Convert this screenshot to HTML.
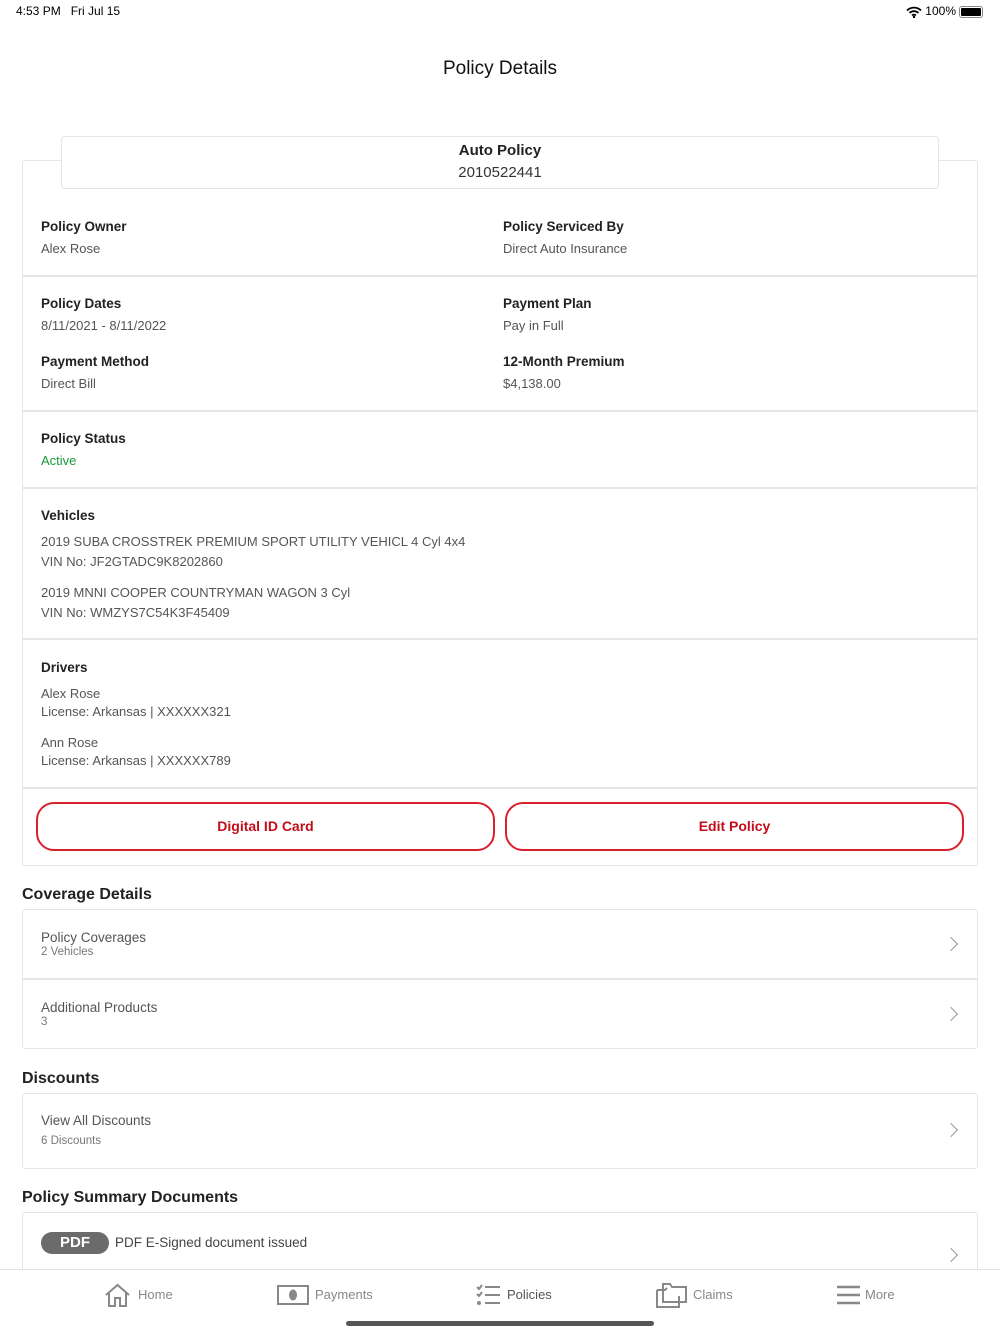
<!DOCTYPE html>
<html><head><meta charset="utf-8"><style>
*{margin:0;padding:0;box-sizing:border-box}
body{width:1000px;height:1334px;background:#fff;font-family:"Liberation Sans",sans-serif;position:relative;overflow:hidden;color:#222}
.a{position:absolute;white-space:nowrap}
.l{font-size:13.5px;font-weight:bold;color:#222}
.v{font-size:13px;color:#555}
.h{font-size:16px;font-weight:bold;color:#222}
.line{position:absolute;left:22px;width:956px;height:2px;background:#e6e6e6}
.box{position:absolute;left:22px;width:956px;border:1.5px solid #e6e6e6;border-radius:3px;background:#fff}
.btn{position:absolute;top:802px;height:49px;border:2px solid #d9202d;border-radius:18px;color:#c40d1a;font-weight:bold;font-size:14px;text-align:center;line-height:45px}
.chev{position:absolute;right:22px;width:10px;height:10px;border-right:1.5px solid #999;border-top:1.5px solid #999;transform:rotate(45deg)}
.tab{position:absolute;top:1287px;font-size:13px;color:#888}
</style></head><body>
<div class="a" style="left:16px;top:4px;font-size:12px;color:#000">4:53 PM&nbsp;&nbsp;&nbsp;Fri Jul 15</div>
<div class="a" style="right:44px;top:4px;font-size:12px;color:#000">100%</div>
<svg class="a" style="left:906px;top:6px" width="16" height="12" viewBox="0 0 16 12"><path d="M1 4.5a10 10 0 0 1 14 0M3.5 7a6.5 6.5 0 0 1 9 0M6 9.4a3 3 0 0 1 4 0" stroke="#000" stroke-width="1.8" fill="none"/><circle cx="8" cy="11" r="1.2"/></svg>
<div class="a" style="left:959px;top:6px;width:24px;height:12px;border:1px solid #888;border-radius:3px;padding:1px"><div style="width:100%;height:100%;background:#000;border-radius:1px"></div></div>
<div class="a" style="left:0;width:1000px;top:58px;text-align:center;font-size:19px;color:#111">Policy Details</div>

<div class="box" style="top:160px;height:706px"></div>
<div class="a" style="left:61px;top:136px;width:878px;height:53px;border:1.5px solid #e6e6e6;border-radius:4px;background:#fff;text-align:center">
<div style="font-size:15px;font-weight:bold;margin-top:5px">Auto Policy</div>
<div style="font-size:15px;color:#333;margin-top:5px">2010522441</div></div>

<div class="a l" style="left:41px;top:219px">Policy Owner</div>
<div class="a v" style="left:41px;top:241px">Alex Rose</div>
<div class="a l" style="left:503px;top:219px">Policy Serviced By</div>
<div class="a v" style="left:503px;top:241px">Direct Auto Insurance</div>
<div class="line" style="top:275px"></div>
<div class="a l" style="left:41px;top:296px">Policy Dates</div>
<div class="a v" style="left:41px;top:318px">8/11/2021 - 8/11/2022</div>
<div class="a l" style="left:503px;top:296px">Payment Plan</div>
<div class="a v" style="left:503px;top:318px">Pay in Full</div>
<div class="a l" style="left:41px;top:354px">Payment Method</div>
<div class="a v" style="left:41px;top:376px">Direct Bill</div>
<div class="a l" style="left:503px;top:354px">12-Month Premium</div>
<div class="a v" style="left:503px;top:376px">$4,138.00</div>
<div class="line" style="top:410px"></div>
<div class="a l" style="left:41px;top:431px">Policy Status</div>
<div class="a v" style="left:41px;top:453px;color:#1a9a3a">Active</div>
<div class="line" style="top:487px"></div>
<div class="a l" style="left:41px;top:508px">Vehicles</div>
<div class="a v" style="left:41px;top:534px">2019 SUBA CROSSTREK PREMIUM SPORT UTILITY VEHICL 4 Cyl 4x4</div>
<div class="a v" style="left:41px;top:554px">VIN No: JF2GTADC9K8202860</div>
<div class="a v" style="left:41px;top:585px">2019 MNNI COOPER COUNTRYMAN WAGON 3 Cyl</div>
<div class="a v" style="left:41px;top:605px">VIN No: WMZYS7C54K3F45409</div>
<div class="line" style="top:638px"></div>
<div class="a l" style="left:41px;top:660px">Drivers</div>
<div class="a v" style="left:41px;top:686px">Alex Rose</div>
<div class="a v" style="left:41px;top:704px">License: Arkansas | XXXXXX321</div>
<div class="a v" style="left:41px;top:735px">Ann Rose</div>
<div class="a v" style="left:41px;top:753px">License: Arkansas | XXXXXX789</div>
<div class="line" style="top:787px"></div>
<div class="btn" style="left:36px;width:459px">Digital ID Card</div>
<div class="btn" style="left:505px;width:459px">Edit Policy</div>

<div class="a h" style="left:22px;top:886px">Coverage Details</div>
<div class="box" style="top:909px;height:140px"></div>
<div class="line" style="top:978px"></div>
<div class="a" style="left:41px;top:930px;font-size:13.5px;color:#555">Policy Coverages</div>
<div class="a" style="left:41px;top:946px;font-size:11.5px;color:#777">2 Vehicles</div>
<div class="chev" style="top:939px;right:44px"></div>
<div class="a" style="left:41px;top:1000px;font-size:13.5px;color:#555">Additional Products</div>
<div class="a" style="left:41px;top:1016px;font-size:11.5px;color:#777">3</div>
<div class="chev" style="top:1009px;right:44px"></div>

<div class="a h" style="left:22px;top:1070px">Discounts</div>
<div class="box" style="top:1093px;height:76px"></div>
<div class="a" style="left:41px;top:1113px;font-size:13.5px;color:#555">View All Discounts</div>
<div class="a" style="left:41px;top:1135px;font-size:11.5px;color:#777">6 Discounts</div>
<div class="chev" style="top:1125px;right:44px"></div>

<div class="a h" style="left:22px;top:1189px">Policy Summary Documents</div>
<div class="box" style="top:1212px;height:90px"></div>
<div class="a" style="left:41px;top:1232px;width:68px;height:22px;border-radius:11px;background:#6b6b6b;color:#fff;font-weight:bold;font-size:15px;text-align:center;line-height:22px">PDF</div>
<div class="a" style="left:115px;top:1235px;font-size:13.5px;color:#444">PDF E-Signed document issued</div>
<div class="chev" style="top:1250px;right:44px"></div>

<div class="a" style="left:0;top:1269px;width:1000px;height:65px;background:#fff;border-top:1px solid #e3e3e3"></div>
<svg class="a" style="left:104px;top:1283px" width="27" height="24" viewBox="0 0 27 24"><path d="M2 12L13.5 2 25 12M5 10v13h6v-8h5v8h6V10" stroke="#888" stroke-width="2" fill="none"/></svg>
<div class="tab" style="left:138px">Home</div>
<svg class="a" style="left:277px;top:1285px" width="32" height="20" viewBox="0 0 32 20"><rect x="1" y="1" width="30" height="18" fill="none" stroke="#888" stroke-width="2"/><ellipse cx="16" cy="10" rx="4" ry="5.5" fill="#888"/></svg>
<div class="tab" style="left:315px">Payments</div>
<svg class="a" style="left:476px;top:1284px" width="25" height="22" viewBox="0 0 25 22"><path d="M1 3l2 2 3-4M1 10l2 2 3-4M9 3h15M9 11h15M9 19h15" stroke="#888" stroke-width="2" fill="none"/><circle cx="3" cy="19" r="2" fill="#888"/></svg>
<div class="tab" style="left:507px;color:#555">Policies</div>
<svg class="a" style="left:656px;top:1282px" width="32" height="26" viewBox="0 0 32 26"><path d="M1 8v17h22V14M1 8h8l2-2M7 2h7l2 3h14v15H7z" stroke="#888" stroke-width="2" fill="none"/></svg>
<div class="tab" style="left:693px">Claims</div>
<svg class="a" style="left:837px;top:1285px" width="23" height="20" viewBox="0 0 23 20"><path d="M0 2h23M0 10h23M0 18h23" stroke="#888" stroke-width="2.5"/></svg>
<div class="tab" style="left:865px">More</div>
<div class="a" style="left:346px;top:1321px;width:308px;height:5px;border-radius:3px;background:#555"></div>
</body></html>
